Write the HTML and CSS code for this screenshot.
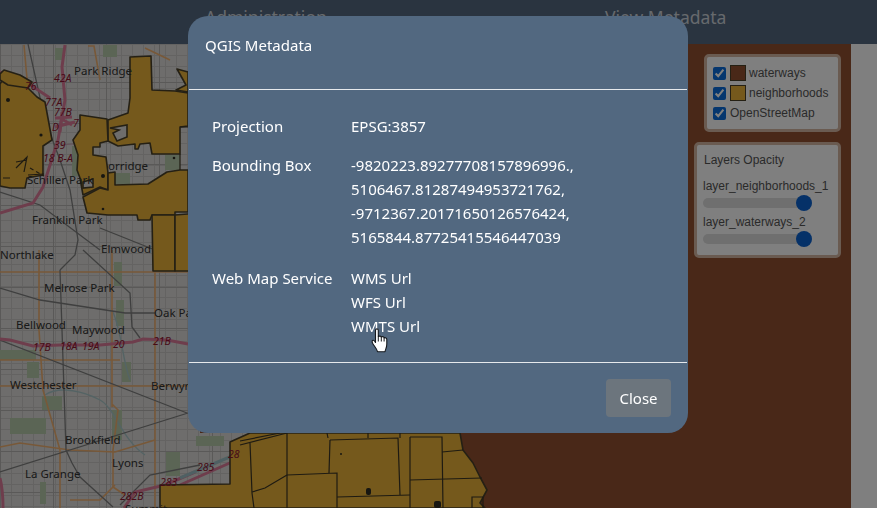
FILE: index.html
```html
<!DOCTYPE html>
<html lang="en">
<head>
<meta charset="utf-8">
<title>QGIS Metadata</title>
<link rel="stylesheet" href="styles.css">
</head>
<body>
<header class="topbar">
  <a class="nav-link nav-admin">Administration</a>
  <a class="nav-link nav-meta">View Metadata</a>
</header>
<main class="stage">
  <div class="map">
    <svg class="map-art" viewBox="0 44 851 464" preserveAspectRatio="none" aria-hidden="true">
      <defs>
        <pattern id="streets" width="11" height="11" patternUnits="userSpaceOnUse">
          <path d="M0 .5H11M.5 0V11" stroke="#c8c7c4" stroke-width="1" fill="none"/>
        </pattern>
        <pattern id="blocks" width="53" height="41" patternUnits="userSpaceOnUse">
          <path d="M0 .5H53M.5 0V41" stroke="#b4b3b0" stroke-width="1" fill="none"/>
        </pattern>
      </defs>
      <rect x="0" y="44" width="851" height="464" fill="#925030"/>
      <polygon points="0,44 200,44 200,433 270,433 270,508 0,508" fill="#dcdbd8"/>
      <polygon points="0,44 200,44 200,433 270,433 270,508 0,508" fill="url(#streets)"/>
      <polygon points="0,44 200,44 200,433 270,433 270,508 0,508" fill="url(#blocks)"/>
      <g fill="#b6cbab">
        <rect x="103" y="45" width="14" height="12"/>
        <rect x="55" y="48" width="9" height="12"/>
        <rect x="72" y="146" width="8" height="30"/>
        <rect x="108" y="173" width="22" height="11"/>
        <rect x="165" y="155" width="15" height="15"/>
        <rect x="114" y="262" width="8" height="24"/>
        <rect x="116" y="300" width="8" height="26"/>
        <rect x="122" y="362" width="9" height="20"/>
        <rect x="0" y="350" width="36" height="10"/>
        <rect x="27" y="362" width="12" height="16"/>
        <rect x="10" y="418" width="36" height="16"/>
        <rect x="42" y="396" width="20" height="14"/>
        <rect x="112" y="410" width="10" height="30"/>
        <rect x="166" y="452" width="14" height="24"/>
        <rect x="40" y="482" width="6" height="22"/>
        <rect x="196" y="436" width="28" height="10"/>
      </g>
      <g fill="none" stroke="#a9c7c9" stroke-width="1.4">
        <path d="M45 395C60 385 85 392 100 400S122 440 145 455"/>
        <path d="M112 310C122 330 122 360 130 380"/>
      </g>
      <g fill="none" stroke="#f0b070" stroke-width="1.6">
        <path d="M39 250V330L43 390L60 450V508"/>
        <path d="M112 250V407L113 405L118 410L113 450V487L125 495"/>
        <path d="M155 250V508"/>
        <path d="M0 272H188"/>
        <path d="M0 360H120"/>
        <path d="M0 386H188"/>
        <path d="M0 447L20 443L70 450L115 452L155 440"/>
        <path d="M88 46H94L100 80M24 45L28 90M145 48L170 60"/>
        <path d="M70 500H100L115 485"/>
      </g>
      <g fill="none" stroke="#7e7e7e" stroke-width="1.3">
        <path d="M0 340L187 413"/>
        <path d="M0 472L188 413"/>
        <path d="M0 288L40 300L125 313H155"/>
        <path d="M60 270L66 450L72 463L80 477L113 507"/>
        <path d="M83 250L130 293L132 327L140 338"/>
        <path d="M28 44L45 120L60 160L70 190L78 240L75 255L60 270"/>
        <path d="M100 228L155 250"/>
        <path d="M0 192L40 205L100 250"/>
        <path d="M120 505L150 475L200 465"/>
      </g>
      <path d="M60 145L125 140" fill="none" stroke="#c9a3b3" stroke-width="1"/>
      <g fill="none" stroke="#dc7a98" stroke-width="3">
        <path d="M65 45L62 67L65 100L58 140L43 187L33 203L0 213"/>
        <path d="M0 72L23 80L50 98"/>
        <path d="M0 339L10 340L33 346L60 345L100 345L133 342L143 339L167 340L188 344"/>
        <path d="M55 118L72 117M55 127L75 122M62 112L60 132M72 125L60 118"/>
        <path d="M0 478C3 490 3 500 3 508"/>
        <path d="M124 508L135 492L165 485L195 472"/>
        <path d="M180 485L232 462"/>
      </g>
      <path d="M180 478L232 456" fill="none" stroke="#9fc0c6" stroke-width="3"/>
      <g fill="#eab238" stroke="#4a4029" stroke-width="1.6" stroke-linejoin="round">
        <polygon points="0,84 5,76 13,79 25,83 28,88 37,97 45,102 52,140 43,146 43,175 27,178 25,188 10,188 0,186"/>
        <polygon points="4,70 20,75 32,82 28,88 8,85 0,80 0,74"/>
        <polygon points="130,57 151,56 152,90 175,91 188,93 188,126 180,127 180,154 152,154 150,143 140,144 138,149 135,149 135,144 118,146 108,141 108,120 128,113 130,98"/>
        <polygon points="80,115 107,119 108,141 100,143 100,147 93,147 93,155 106,157 108,173 108,190 100,187 83,195 80,178 77,170 78,155 73,140 80,130"/>
        <polygon points="108,173 115,172 115,185 148,184 167,172 180,170 188,170 188,212 175,212 175,215 152,215 150,220 138,220 137,215 108,215 87,213 83,197 100,188 108,190"/>
        <polygon points="177,69 188,72 188,92 176,90 186,85"/>
        <polygon points="152,215 175,215 175,271 153,271"/>
        <polygon points="175,215 200,213 200,271 175,271"/>
        <polygon points="160,485 230,484 230,442 250,433 460,433 463,450 473,463 480,477 487,490 480,503 485,508 160,508"/>
      </g>
      <g fill="#dcdbd8" stroke="#4a4029" stroke-width="1.6">
        <polygon points="110,128 127,125 127,137 117,141 113,133 119,130"/>
        <polygon points="83,182 93,179 93,187 83,188"/>
      </g>
      <g fill="none" stroke="#3c3524" stroke-width="1.2">
        <path d="M180 127H188M180 154V170"/>
        <path d="M250 443L252 493L254 508"/>
        <path d="M287 433V508"/>
        <path d="M287 475L337 473L337 508"/>
        <path d="M337 497L410 495"/>
        <path d="M330 440L398 438L400 495"/>
        <path d="M330 440L329 473"/>
        <path d="M410 437V508"/>
        <path d="M410 480L482 478"/>
        <path d="M410 437H442L443 508"/>
        <path d="M442 452L463 450"/>
        <path d="M252 492L265 488L287 475"/>
        <path d="M240 445L287 433M240 441L280 433"/>
        <path d="M327 433L328 438M368 433V438M400 433V438"/>
        <path d="M472 508V497H483V508"/>
        <path d="M16 168L27 157L24 172M16 162L27 160"/>
        <path d="M28 175L44 174M3 178H10"/>
        <path d="M30 168L44 176" stroke-dasharray="4 3"/>
      </g>
      <g fill="#2f2c22">
        <circle cx="8" cy="100" r="2"/>
        <circle cx="41" cy="135" r="1.6"/>
        <circle cx="103" cy="209" r="1.3"/>
        <circle cx="103" cy="176" r="2"/>
        <circle cx="174" cy="158" r="1.3"/>
        <circle cx="341" cy="454" r="1"/>
        <rect x="366" y="488" width="5" height="7" rx="2"/>
        <rect x="434" y="501" width="7" height="7" rx="2"/>
      </g>
      <g class="place">
        <text x="74" y="75">Park Ridge</text>
        <text x="108" y="170">orridge</text>
        <text x="27" y="184">Schiller Park</text>
        <text x="32" y="224">Franklin Park</text>
        <text x="101" y="253">Elmwood</text>
        <text x="0" y="259">Northlake</text>
        <text x="44" y="292">Melrose Park</text>
        <text x="154" y="317">Oak Park</text>
        <text x="16" y="329">Bellwood</text>
        <text x="72" y="334">Maywood</text>
        <text x="10" y="389">Westchester</text>
        <text x="151" y="390">Berwyn</text>
        <text x="65" y="444">Brookfield</text>
        <text x="112" y="467">Lyons</text>
        <text x="25" y="478">La Grange</text>
        <text x="125" y="513">Summit</text>
      </g>
      <g class="shield">
        <text x="54" y="82">42A</text>
        <text x="25" y="90">76</text>
        <text x="45" y="106">77A</text>
        <text x="54" y="116">77B</text>
        <text x="52" y="131">D</text>
        <text x="73" y="127">7</text>
        <text x="54" y="149">39</text>
        <text x="43" y="162">18 B-A</text>
        <text x="33" y="351">17B</text>
        <text x="60" y="350">18A</text>
        <text x="82" y="350">19A</text>
        <text x="113" y="348">20</text>
        <text x="153" y="345">21B</text>
        <text x="120" y="500">282B</text>
        <text x="160" y="486">283</text>
        <text x="197" y="471">285</text>
        <text x="228" y="458">28</text>
      </g>
    </svg>

    <form class="panel layers">
      <label class="layer-row"><input type="checkbox" checked><span class="swatch swatch-water"></span>waterways</label>
      <label class="layer-row"><input type="checkbox" checked><span class="swatch swatch-hood"></span>neighborhoods</label>
      <label class="layer-row"><input type="checkbox" checked>OpenStreetMap</label>
    </form>

    <form class="panel opacity">
      <div class="opacity-title">Layers Opacity</div>
      <label class="opacity-label" for="o1">layer_neighborhoods_1</label>
      <input id="o1" class="slider" type="range" min="0" max="100" value="100">
      <label class="opacity-label" for="o2">layer_waterways_2</label>
      <input id="o2" class="slider" type="range" min="0" max="100" value="100">
    </form>
  </div>
</main>

<div class="backdrop"></div>

<section class="modal" role="dialog">
  <div class="modal-header">QGIS Metadata</div>
  <div class="modal-body">
    <div class="meta-label">Projection</div>
    <div>EPSG:3857</div>
    <div class="meta-label">Bounding Box</div>
    <div class="bbox">-9820223.89277708157896996.,<br>5106467.81287494953721762,<br>-9712367.20171650126576424,<br>5165844.87725415546447039</div>
    <div class="meta-label">Web Map Service</div>
    <div class="links"><a>WMS Url</a><a>WFS Url</a><a>WMTS Url</a></div>
  </div>
  <div class="modal-footer"><button class="close-btn" type="button">Close</button></div>
</section>

<svg class="cursor" viewBox="0 0 18 25" aria-hidden="true">
  <path d="M4.5 2.2C4.5 .4 7.3 .4 7.3 2.2V8.5C8.8 7.8 10 8 10.3 9C11.6 8.3 12.9 8.8 13.1 9.9C14.4 9.3 15.8 10 15.8 11.5V16C15.8 20 14.5 21 14 23.7H6.5C6 21 4 19 2 16C.6 14 1 12 2.3 12.2C3 12.3 4 13.5 4.5 14.5Z" fill="#fff" stroke="#15181c" stroke-width="1.1" stroke-linejoin="round"/>
  <path d="M7.3 8.5V13.5M10.3 9V13.5M13.1 9.9V13.5" stroke="#15181c" stroke-width="1" fill="none"/>
</svg>
</body>
</html>
```

FILE: styles.css
```css
* { box-sizing: border-box; }

html, body {
  margin: 0;
  height: 100%;
  overflow: hidden;
}

body {
  display: flex;
  flex-direction: column;
  background: #fff;
  font-family: "Noto Sans", sans-serif;
}

.topbar {
  flex: 0 0 44px;
  display: flex;
  align-items: flex-start;
  background: #546881;
  color: #fff;
  font-size: 17.5px;
  line-height: 24px;
  padding-top: 5px;
}

.nav-link { color: rgba(255, 255, 255, .72); }
.nav-admin { margin-left: 205px; width: 400px; }

.stage {
  flex: 1;
  display: flex;
  padding-right: 26px;
  min-height: 0;
}

.map {
  position: relative;
  flex: 1;
  overflow: hidden;
}

.map-art {
  display: block;
  width: 100%;
  height: 100%;
}

.place text {
  font: 11.5px "Noto Sans", sans-serif;
  fill: #333;
}

.shield text {
  font: italic 10.5px "Noto Sans", sans-serif;
  fill: #8f1631;
}

.panel {
  position: absolute;
  right: 10px;
  margin: 0;
  background: #fff;
  border: 3px solid #d4b6a2;
  border-radius: 5px;
  font-family: "Liberation Sans", sans-serif;
  font-size: 12px;
  color: #555;
}

.layers {
  top: 10px;
  width: 137px;
  height: 78px;
  padding: 6px 0 0 6px;
}

.layer-row {
  display: flex;
  align-items: center;
  height: 20px;
}

.layer-row input {
  width: 13px;
  height: 13px;
  margin: 0 4px 0 0;
  accent-color: #0a6cdc;
}

.swatch {
  width: 16px;
  height: 16px;
  margin: 0 3px 0 0;
  border: 1px solid #4a4029;
}

.swatch-water { background: #925030; }
.swatch-hood { background: #eab238; }

.opacity {
  top: 98px;
  width: 147px;
  height: 116px;
  padding: 8px 6px 0 6px;
}

.opacity-title { margin: 0 0 12px 1px; line-height: 14px; }

.opacity-label {
  display: block;
  line-height: 14px;
}

.slider {
  -webkit-appearance: none;
  appearance: none;
  display: block;
  width: 109px;
  height: 10px;
  margin: 5px 0 7px;
  border-radius: 5px;
  background: #dedede;
}

.slider::-webkit-slider-thumb {
  -webkit-appearance: none;
  appearance: none;
  width: 16px;
  height: 16px;
  border-radius: 50%;
  background: #0b62d0;
  border: 0;
}

.backdrop {
  position: fixed;
  inset: 0;
  background: rgba(0, 0, 0, .5);
}

.modal {
  position: fixed;
  top: 16px;
  left: 188px;
  width: 500px;
  height: 417px;
  display: flex;
  flex-direction: column;
  background: #526880;
  border: 1px solid transparent;
  border-radius: 20px;
  color: #fff;
  font-size: 15px;
  line-height: 24px;
}

.modal-header {
  flex: 0 0 73px;
  padding: 16px 16px 0;
  border-bottom: 1px solid #e6e9ec;
}

.modal-body {
  flex: 1;
  display: grid;
  grid-template-columns: 139px 1fr;
  align-content: start;
  row-gap: 15px;
  padding: 24px 23px 0;
}

.bbox { margin-bottom: 2px; }

.links { display: flex; flex-direction: column; }

.modal-footer {
  flex: 0 0 70px;
  display: flex;
  justify-content: flex-end;
  align-items: flex-start;
  padding: 16px 16px 0;
  border-top: 1px solid #e6e9ec;
}

.close-btn {
  width: 65px;
  height: 38px;
  padding: 0;
  border: 0;
  border-radius: 4px;
  background: #6c757d;
  color: #fff;
  font: 15px/24px "Noto Sans", sans-serif;
}

.cursor {
  position: fixed;
  left: 371px;
  top: 328px;
  width: 18px;
  height: 25px;
}
```
